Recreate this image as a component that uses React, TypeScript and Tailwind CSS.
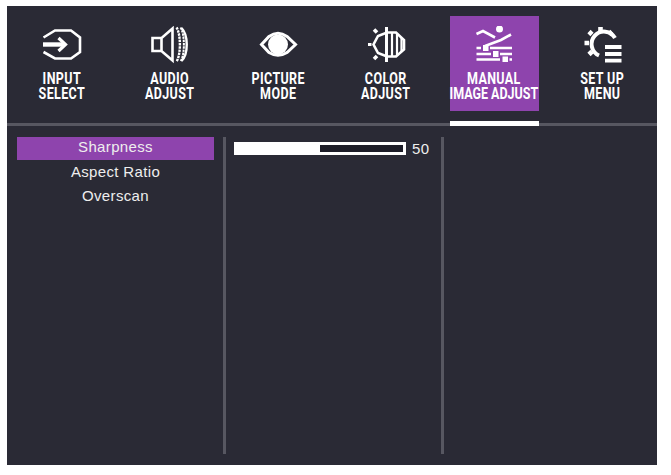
const InputIcon = () => (
  <svg width="48" height="40" viewBox="38 26 48 40" fill="none" stroke="white" strokeWidth="2.6">
    <path d="M43.5 37.5 L55 30.5 H71 L80 37.5 V52 L71 58.5 H55 L43.5 52" />
    <path d="M43 44.5 H65" strokeWidth="4.4" />
    <path d="M58.5 38 L65.5 44.5 L58.5 51" strokeWidth="3.2" />
  </svg>
);

const AudioIcon = () => (
  <svg width="48" height="40" viewBox="146 26 48 40" fill="none" stroke="white" strokeWidth="2.6">
    <path d="M161.5 38 H152.5 V51 H161.5 L172.5 60.5 V28.5 L161.5 38 V51" />
    <path d="M176.5 27.5 C181 34 181 55 176.5 61.5" strokeWidth="2.4" strokeDasharray="2.4 0.8" />
    <path d="M180.5 27.5 C185 34 185 55 180.5 61.5" strokeWidth="2" strokeDasharray="2.4 0.8" />
    <path d="M181.5 28 C188.5 35 188.5 54 181.5 61" strokeWidth="2.4" />
  </svg>
);

const PictureIcon = () => (
  <svg width="48" height="40" viewBox="254 26 48 40" fill="none" stroke="white" strokeWidth="3">
    <path d="M261.5 44.5 L269 36.5 Q278 30 287 36.5 L295.5 44.5 L287 52.5 Q278 58 269 52.5 Z" />
    <circle cx="278" cy="44.5" r="10" fill="white" stroke="none" />
  </svg>
);

const ColorIcon = () => (
  <svg width="48" height="40" viewBox="362 26 48 40" fill="none" stroke="white" strokeWidth="2.6">
    <path d="M387 32.5 H396 L404 40 V49.5 L396 56.5 H387 L378 53 L373.5 44.5 L378 36 Z" />
    <path d="M386.5 27 V62" strokeWidth="3" />
    <path d="M392 33 V56 M397 33 V56 M401.5 38 V51" strokeWidth="2.2" />
    <path d="M368 44.5 H371.5" strokeWidth="3" />
    <path d="M374 29.5 L377 32.5 M374 59 L377 56" strokeWidth="3.6" />
  </svg>
);

const ManualIcon = () => (
  <svg width="48" height="40" viewBox="470 26 48 40" fill="none" stroke="white" strokeWidth="2.6">
    <circle cx="499.5" cy="29" r="3.5" fill="white" stroke="none" />
    <path d="M476.5 34 L483 31 L495 37.5" />
    <path d="M511 34.5 L501 40 L485 46" />
    <path d="M476.5 48 H481 M490 48 H512 M476.5 54 H491 M500 54 H512 M476.5 59.5 H500 M509.5 59.5 H512" strokeWidth="2.4" />
    <path d="M483 45 H488.5 V51 H483 Z M493 51 H498.5 V57 H493 Z M502.5 56.5 H508 V62 H502.5 Z" fill="white" stroke="none" />
  </svg>
);

const SetupIcon = () => (
  <svg width="48" height="40" viewBox="578 26 48 40" fill="none" stroke="white" strokeWidth="4">
    <path d="M615 38 A12.5 12.5 0 1 0 599 55.5" />
    <path d="M600.5 27 V32 M589 31.5 L592 34.5 M584.5 43 H589 M589 54.5 L592 51.5 M612 31.5 L609 34.5" strokeWidth="4.6" />
    <path d="M605 47 H621.5 M605 54 H621.5 M605 60.7 H621.5" strokeWidth="3.8" />
  </svg>
);

const tabs = [
  { icon: <InputIcon />, label: ["INPUT", "SELECT"] },
  { icon: <AudioIcon />, label: ["AUDIO", "ADJUST"] },
  { icon: <PictureIcon />, label: ["PICTURE", "MODE"] },
  { icon: <ColorIcon />, label: ["COLOR", "ADJUST"] },
  { icon: <ManualIcon />, label: ["MANUAL", "IMAGE ADJUST"], active: true },
  { icon: <SetupIcon />, label: ["SET UP", "MENU"] },
];

const App = () => {
  return (
    <div className="w-[671px] h-[475px] bg-white pt-[6px] pl-[7px] overflow-hidden">
      <div className="w-[650px] h-[459px] bg-[#2a2a35] flex flex-col font-['Liberation_Sans',sans-serif]">
        <div className="flex h-[120px] pl-px border-b-[3px] border-[#575761]">
          {tabs.map((tab) => (
            <div key={tab.label[0]} className="relative w-[108px] h-[117px] flex justify-center pt-[10px]">
              <div className={`w-[89px] h-[95px] flex flex-col items-center pt-[10px] ${tab.active ? "bg-[#8e44ad]" : ""}`}>
                {tab.icon}
                <div className="mt-[5px] text-white text-center font-['Roboto',sans-serif] font-bold text-[16px] leading-[15px] whitespace-nowrap scale-x-[0.78] tracking-[0.5px]">
                  {tab.label.map((line) => (
                    <div key={line} className={line === "IMAGE ADJUST" ? "tracking-[0px]" : ""}>
                      {line}
                    </div>
                  ))}
                </div>
              </div>
              {tab.active && <div className="absolute left-[9.5px] top-[115px] w-[89px] h-[5px] bg-white" />}
            </div>
          ))}
        </div>
        <div className="flex flex-1 pt-[11px] pb-[11px]">
          <div className="w-[216px] pl-[10px] pr-[9px] text-[#eeeeee] text-[15px] tracking-[0.35px] text-center">
            <div className="h-[23px] leading-[20px] bg-[#8e44ad]">Sharpness</div>
            <div className="h-[24px] leading-[24px]">Aspect Ratio</div>
            <div className="h-[24px] leading-[24px]">Overscan</div>
          </div>
          <div className="w-[218px] border-l-[3px] border-[#575761] pl-[8px] pt-[5px]">
            <div className="flex items-center gap-[6px]">
              <div className="w-[172px] h-[13px] border-[3px] border-white bg-[#1d1d28]">
                <div className="w-[83px] h-full bg-white" />
              </div>
              <span className="text-[#eeeeee] text-[15px] tracking-[0.5px] leading-[13px]">50</span>
            </div>
          </div>
          <div className="flex-1 border-l-[3px] border-[#575761]" />
        </div>
      </div>
    </div>
  );
};

export default App;
